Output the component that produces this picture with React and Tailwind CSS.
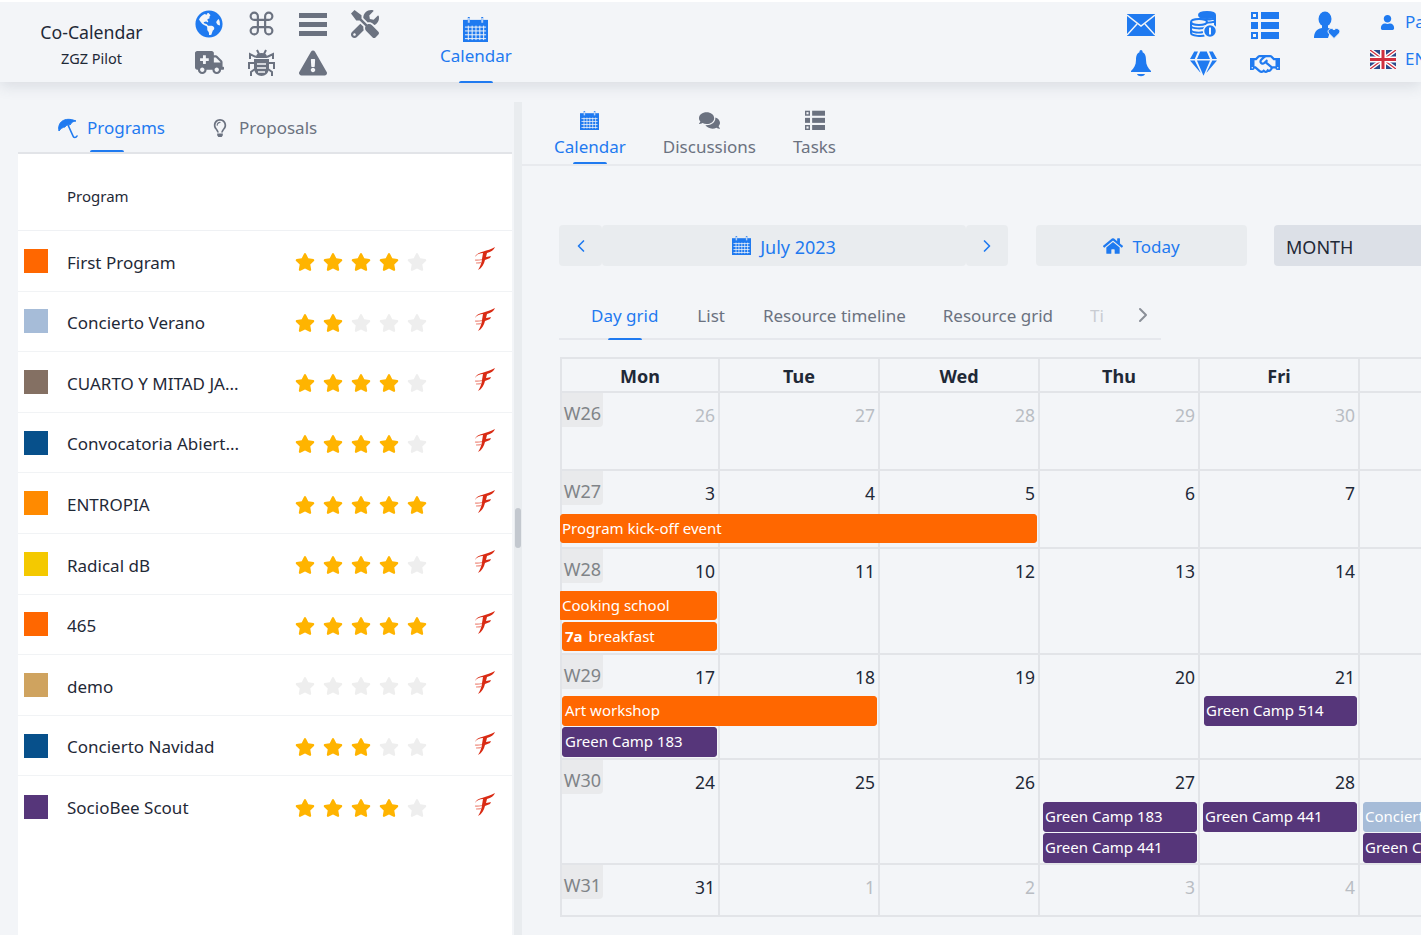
import React from 'react';
import { FaGlobeAmericas, FaTools, FaAmbulance, FaExclamationTriangle, FaGem, FaRegHandshake, FaUser, FaRegLightbulb, FaComments, FaHome, FaStar } from 'react-icons/fa';
import { Command, ChevronLeft, ChevronRight } from 'lucide-react';

const BLUE = 'text-[#1f7af0]';
const GRAY = 'text-[#6b7280]';
const BG = '#f3f5f8';

const Bars = () => (
  <svg width="28" height="24" viewBox="0 0 28 24" fill="currentColor">
    <rect x="0" y="1" width="28" height="5" />
    <rect x="0" y="10" width="28" height="5" />
    <rect x="0" y="19" width="28" height="5" />
  </svg>
);

// calendar glyph used in several places, just scale it
const Cal = ({ size = 26 }) => (
  <svg width={size} height={size} viewBox="0 0 26 26" fill="currentColor">
    <rect x="0" y="3" width="26" height="23" />
    <rect x="5" y="0" width="2" height="6" />
    <rect x="19" y="0" width="2" height="6" />
    <g fill={BG}>
      <rect x="5" y="1" width="2" height="5" opacity="0.7" />
      <rect x="19" y="1" width="2" height="5" opacity="0.7" />
      {[10, 14, 18, 22].map(y => <rect key={y} x="2" y={y} width="22" height="1" />)}
      {[5, 9, 13, 17, 21].map(x => <rect key={x} x={x} y="9" width="1" height="15" />)}
    </g>
  </svg>
);

const Checklist = ({ size = 28 }) => (
  <svg width={size} height={size} viewBox="0 0 28 28" fill="currentColor">
    <rect x="0" y="1" width="7" height="7" />
    <rect x="0" y="11" width="7" height="7" />
    <rect x="0" y="21" width="7" height="7" />
    <rect x="2" y="3" width="3" height="3" fill={BG} />
    <rect x="2" y="23" width="3" height="3" fill={BG} />
    <rect x="10" y="1" width="18" height="7" />
    <rect x="10" y="11" width="18" height="7" />
    <rect x="10" y="21" width="18" height="7" />
  </svg>
);

const UserHeart = () => (
  <svg width="26" height="28" viewBox="0 0 26 28" fill="currentColor">
    <ellipse cx="11" cy="8" rx="6.5" ry="7.5" />
    <path d="M8 14h6v3c3 .5 5 1.500 6 3l-4 1-2 6H0c0-5 2-9 8-10z" />
    <path d="M20 27.500l-5.500-5.500c-2-3 3-6.500 5.500-3 2.500-3.500 7.500 0 5.500 3z" stroke={BG} strokeWidth="1" />
  </svg>
);

const Mail = () => (
  <svg width="28" height="22" viewBox="0 0 28 22" fill="currentColor">
    <rect width="28" height="22" />
    <path d="M0 1l14 11L28 1M0 21l10-11M28 21L18 10" fill="none" stroke={BG} strokeWidth="1.500" />
  </svg>
);

const Coins = () => (
  <svg width="27" height="27" viewBox="0 0 27 27" fill="none" stroke="currentColor" strokeWidth="2">
    <ellipse cx="17" cy="4" rx="8" ry="3" fill="currentColor" />
    <path d="M9 7c1 2 14 2 16 0M9 11c3 1 14 1 16-1M25 4v12" />
    <ellipse cx="9" cy="11" rx="8" ry="3" fill={BG} />
    <path d="M1 11v11c0 3 12 4 14 2M1 15c1 3 12 3 15 1M1 19c1 3 9 3 12 2" />
    <circle cx="20" cy="20" r="6.500" fill="currentColor" stroke={BG} strokeWidth="1.500" />
    <path d="M20 16.500v7" stroke={BG} strokeWidth="2" />
  </svg>
);

const Bell = () => (
  <svg width="20" height="27" viewBox="0 0 20 27" fill="currentColor">
    <rect x="8.500" y="0" width="3" height="4" rx="1.500" />
    <path d="M10 2c4 0 5 4 5 8 0 5 2 8 5 11v1H0v-1c3-3 5-6 5-11 0-4 1-8 5-8z" />
    <path d="M6 24h8c-1 3-7 3-8 0z" />
  </svg>
);

const Beetle = () => (
  <svg width="29" height="28" viewBox="0 0 29 28" fill="none" stroke="currentColor" strokeWidth="2">
    <path d="M10 1l2 4M19 1l-2 4M9 8L3 5v5M20 8l6-3v5M7 14H2v6M22 14h5v6M8 20l-4 3v4M21 20l4 3v4" />
    <path d="M10 8c0-4 9-4 9 0z" fill="currentColor" />
    <path d="M7 10h15v9c0 5-4 8-7.500 8S7 24 7 19z" fill="currentColor" stroke="none" />
    <path d="M10 15h9M10 19h9M11 23h7" stroke={BG} strokeWidth="1.500" />
  </svg>
);

const Umbrella = () => (
  <svg width="20" height="22" viewBox="0 0 20 22" fill="none" stroke="currentColor">
    <path d="M1 14C-1 6 6-1 18 4c-3 0-5 2-6 4-2-1-4 0-5 2-2 0-5 2-6 4z" fill="currentColor" strokeWidth="1" />
    <path d="M10 8l5 11c.500 2 3 2 4 0" strokeWidth="1.600" strokeLinecap="round" />
  </svg>
);

const Flag = () => (
  <svg width="26" height="19" viewBox="0 0 26 19" className="shrink-0">
    <rect width="26" height="19" fill="#2b4a8b" />
    <path d="M0 0l26 19M26 0L0 19" stroke="#fff" strokeWidth="4" />
    <path d="M0 0l26 19M26 0L0 19" stroke="#d0303f" strokeWidth="1.300" />
    <path d="M13 0v19M0 9.500h26" stroke="#fff" strokeWidth="6" />
    <path d="M13 0v19M0 9.500h26" stroke="#d0303f" strokeWidth="3" />
  </svg>
);

// red swoosh logo at the end of each program row
const Swoosh = () => (
  <svg width="22" height="24" viewBox="0 0 22 24" fill="#d92b14">
    <path d="M1 10C3 4 13 5 21 0c-1 3-4 5-8 6l-1 4c2 0 4-1 5-1l-1 2-5 2c-1 4-3 8-7 10 2-3 4-8 4-11l1-6C6 6 3 7 1 10z" />
    <path d="M1 13c3 .500 5 0 7-.500M2 16c2 0 4 0 5-.500" stroke="#ee8a7c" strokeWidth="1.200" fill="none" />
  </svg>
);

const PROGRAMS = [
  { name: 'First Program', color: 'bg-[#ff6700]', stars: 4 },
  { name: 'Concierto Verano', color: 'bg-[#a6bcd8]', stars: 2 },
  { name: 'CUARTO Y MITAD JA...', color: 'bg-[#847063]', stars: 4 },
  { name: 'Convocatoria Abiert...', color: 'bg-[#07508b]', stars: 4 },
  { name: 'ENTROPIA', color: 'bg-[#ff8a00]', stars: 5 },
  { name: 'Radical dB', color: 'bg-[#f4c900]', stars: 4 },
  { name: '465', color: 'bg-[#ff6700]', stars: 5 },
  { name: 'demo', color: 'bg-[#cfa35f]', stars: 0 },
  { name: 'Concierto Navidad', color: 'bg-[#07508b]', stars: 3 },
  { name: 'SocioBee Scout', color: 'bg-[#56367a]', stars: 4 },
];

const COLS = ['col-start-1', 'col-start-2', 'col-start-3', 'col-start-4', 'col-start-5', 'col-start-6', 'col-start-7'];

const ORANGE = 'bg-[#ff6700] border-[#ff6700]';
const PURPLE = 'bg-[#56367a] border-[#56367a]';
const LIGHT = 'bg-[#a6bcd8] border-[#a6bcd8]';

const WEEKS = [
  { label: 'W26', rows: 'h-[78px] grid-rows-[78px]', days: [26, 27, 28, 29, 30, 1, 2], muted: d => true, events: [] },
  {
    label: 'W27', rows: 'h-[78px] grid-rows-[43px_29px_6px]', days: [3, 4, 5, 6, 7, 8, 9], muted: d => false,
    events: [{ text: 'Program kick-off event', cls: 'col-start-1 col-span-3 row-start-2 mr-[3px] pl-px', color: ORANGE }],
  },
  {
    label: 'W28', rows: 'h-[106px] grid-rows-[42px_31px_33px]', days: [10, 11, 12, 13, 14, 15, 16], muted: d => false,
    events: [
      { text: 'Cooking school', cls: 'col-start-1 row-start-2 mr-[3px] pl-px h-[29px] rounded-l-none', color: ORANGE },
      { time: '7a', text: 'breakfast', cls: 'col-start-1 row-start-3 ml-[2px] mr-[3px] pl-[2px] h-[29px]', color: ORANGE },
    ],
  },
  {
    label: 'W29', rows: 'h-[105px] grid-rows-[41px_31px_33px]', days: [17, 18, 19, 20, 21, 22, 23], muted: d => false,
    events: [
      { text: 'Art workshop', cls: 'col-start-1 col-span-2 row-start-2 ml-[2px] mr-[3px] pl-[2px] h-[30px]', color: ORANGE },
      { text: 'Green Camp 183', cls: 'col-start-1 row-start-3 ml-[2px] mr-[3px] pl-[2px] h-[30px]', color: PURPLE },
      { text: 'Green Camp 514', cls: 'col-start-5 row-start-2 ml-[4px] mr-[3px] pl-px h-[30px]', color: PURPLE },
    ],
  },
  {
    label: 'W30', rows: 'h-[105px] grid-rows-[42px_31px_32px]', days: [24, 25, 26, 27, 28, 29, 30], muted: d => false,
    events: [
      { text: 'Green Camp 183', cls: 'col-start-4 row-start-2 ml-[3px] mr-[3px] pl-px h-[30px]', color: PURPLE },
      { text: 'Green Camp 441', cls: 'col-start-4 row-start-3 ml-[3px] mr-[3px] pl-px h-[30px]', color: PURPLE },
      { text: 'Green Camp 441', cls: 'col-start-5 row-start-2 ml-[3px] mr-[3px] pl-px h-[30px]', color: PURPLE },
      { text: 'Concierto Verano', cls: 'col-start-6 row-start-2 ml-[3px] mr-[3px] pl-px h-[30px]', color: LIGHT },
      { text: 'Green Camp 441', cls: 'col-start-6 row-start-3 ml-[3px] mr-[3px] pl-px h-[30px]', color: PURPLE },
    ],
  },
  { label: 'W31', rows: 'h-[52px] grid-rows-[52px]', days: [31, 1, 2, 3, 4, 5, 6], muted: d => d < 20, events: [] },
];

const Tab = ({ icon, label, active, under = 'mt-[3px]' }) => (
  <div className={`flex flex-col items-center ${active ? BLUE : GRAY}`}>
    <div className="h-[26px] flex items-center justify-center">{icon}</div>
    <div className="text-[17px] leading-[26px] mt-[1px]">{label}</div>
    <div className={`w-[34px] h-[2px] ${under} rounded-t ${active ? 'bg-[#1f7af0]' : 'bg-transparent'}`} />
  </div>
);

const Week = ({ week }) => (
  <div className={`grid grid-cols-[repeat(7,160px)] w-[1120px] border-b-2 border-[#e2e4e8] ${week.rows}`}>
    {week.days.map((d, i) => (
      <div key={i} className={`${COLS[i]} row-start-1 row-span-full border-r-2 border-[#e2e4e8] flex items-start justify-between ${i === 0 ? 'border-l-2' : ''}`}>
        {i === 0 ? (
          <span className="w-[41px] h-[34px] bg-[#e9eaec] rounded-br text-[18px] leading-[40px] text-center text-[#808488]">{week.label}</span>
        ) : <span />}
        <span className={`text-[17.500px] leading-[24px] mt-[10px] pr-[3px] ${week.muted(d) ? 'text-[#b9bdc3]' : 'text-[#1f2937]'}`}>{d}</span>
      </div>
    ))}
    {week.events.map((e, i) => (
      <div key={i} className={`${e.cls} ${e.color} border rounded-[3px] text-white text-[15px] leading-[27px] whitespace-nowrap overflow-hidden z-10`}>
        {e.time && <b className="mr-[6px]">{e.time}</b>}
        {e.text}
      </div>
    ))}
  </div>
);

export default function App() {
  return (
    <div className="w-[1427px] h-[938px] bg-white overflow-hidden pt-[2px] pr-[6px] pb-[3px] font-['Noto_Sans','Open_Sans',sans-serif] text-[#1f2937]">
      <div className="w-full h-full bg-[#f3f5f8] flex flex-col overflow-hidden">
        {/* top bar */}
        <header className="relative z-20 h-[80px] shrink-0 flex bg-[#f3f5f8] shadow-[0_4px_14px_rgba(60,70,90,0.14)]">
          <div className="w-[183px] flex flex-col items-center pt-[16px]">
            <div className="text-[17.700px] leading-[28px]">Co-Calendar</div>
            <div className="text-[14.500px] leading-[20px] mt-[2px]">ZGZ Pilot</div>
          </div>
          <div className={`grid grid-cols-[repeat(4,52px)] grid-rows-[39px_39px] pt-[2px] place-items-center ${GRAY}`}>
            <FaGlobeAmericas size={28} className={BLUE} />
            <Command size={29} strokeWidth={1.8} />
            <Bars />
            <FaTools size={28} />
            <FaAmbulance size={29} />
            <Beetle />
            <FaExclamationTriangle size={28} />
          </div>
          <div className="ml-[49px] pt-[14px]">
            <Tab icon={<Cal size={25} />} label="Calendar" active under="mt-[12px]" />
          </div>
          <div className={`ml-auto flex ${BLUE}`}>
            <div className="grid grid-cols-[repeat(4,62px)] grid-rows-[39px_39px] pt-[3px] place-items-center">
              <Mail />
              <Coins />
              <Checklist />
              <UserHeart />
              <Bell />
              <FaGem size={27} />
              <FaRegHandshake size={30} />
            </div>
            <div className="w-[63px] overflow-hidden pt-[8px] pl-[12px] text-[17px] whitespace-nowrap">
              <div className="flex items-center gap-[10px] h-[24px] pl-[10px]"><FaUser size={15} className="shrink-0" /><span>Pablo</span></div>
              <div className="flex items-center gap-[9px] h-[24px] mt-[13px]"><Flag /><span>EN</span></div>
            </div>
          </div>
        </header>

        <div className="flex-1 flex min-h-0">
          {/* programs sidebar */}
          <aside className="w-[514px] shrink-0 flex flex-col pl-[18px]">
            <div className="h-[70px] shrink-0 flex flex-col justify-end">
              <div className="flex items-center pl-[40px] text-[17px] h-[26px]">
                <span className={BLUE}><Umbrella /></span>
                <span className={`ml-[9px] ${BLUE}`}>Programs</span>
                <FaRegLightbulb size={18} className={`ml-[46px] ${GRAY}`} />
                <span className={`ml-[10px] ${GRAY}`}>Proposals</span>
              </div>
              <div className="w-[34px] h-[2px] ml-[72px] mt-[9px] bg-[#1f7af0] rounded-t" />
            </div>
            <div className="flex-1 bg-white border-t-2 border-[#e2e4e8] w-[494px]">
              <div className="h-[77px] flex items-center pl-[49px] pt-[8px] text-[15px] border-b border-[#eff1f4]">Program</div>
              {PROGRAMS.map(p => (
                <div key={p.name} className="h-[60.600px] flex items-center border-b border-[#f1f3f5] last:border-0">
                  <span className={`w-[24px] h-[24px] ml-[6px] shrink-0 ${p.color}`} />
                  <span className="ml-[19px] w-[228px] text-[17px] pt-[3px] whitespace-nowrap">{p.name}</span>
                  <span className="flex gap-[8px] mt-[3px]">
                    {[0, 1, 2, 3, 4].map(i => (
                      <FaStar key={i} size={20} className={i < p.stars ? 'text-[#ffb400]' : 'text-[#eeeeee]'} />
                    ))}
                  </span>
                  <span className="ml-[47px] -mt-[3px]"><Swoosh /></span>
                </div>
              ))}
            </div>
          </aside>

          {/* scrollbar */}
          <div className="w-[8px] shrink-0 mt-[20px] bg-[#e9ecef] flex flex-col items-center pt-[406px]">
            <div className="w-[6px] h-[40px] rounded bg-[#c3c8cf]" />
          </div>

          {/* calendar pane */}
          <main className="flex-1 min-w-0 overflow-hidden">
            <div className="h-[84px] border-b-2 border-[#e8eaee] flex items-end pl-[32px] gap-[37px]">
              <Tab icon={<Cal size={19} />} label="Calendar" active under="mt-[2px]" />
              <Tab icon={<FaComments size={21} />} label="Discussions" under="mt-[2px]" />
              <Tab icon={<Checklist size={20} />} label="Tasks" under="mt-[2px]" />
            </div>

            <div className="pl-[37px] pt-[59px] w-[1300px]">
              <div className={`flex h-[41px] ${BLUE} text-[18px]`}>
                <div className="w-[43px] shrink-0 bg-[#e9ecef] rounded flex items-center justify-center"><ChevronLeft size={20} /></div>
                <div className="w-[364px] shrink-0 bg-[#e9ecef] rounded flex items-center justify-center gap-[9px]"><Cal size={19} /><span className="mt-[3px]">July 2023</span></div>
                <div className="w-[42px] shrink-0 bg-[#e9ecef] rounded flex items-center justify-center"><ChevronRight size={20} /></div>
                <div className="ml-[28px] w-[211px] shrink-0 bg-[#e9ecef] rounded flex items-center justify-center gap-[9px] text-[17px]"><FaHome size={20} /><span className="mt-[3px]">Today</span></div>
                <div className="ml-[27px] w-[200px] shrink-0 bg-[#dce0e7] rounded pl-[12px] flex items-center text-[#1f2937]"><span className="mt-[3px]">MONTH</span></div>
              </div>

              <div className="w-[602px] h-[37px] mt-[37px] border-b-2 border-[#e6e8ed] flex items-start pl-[32px] text-[17px] text-[#6b7280] whitespace-nowrap">
                <div className={`flex flex-col items-center ${BLUE}`}>
                  <span className="leading-[26px]">Day grid</span>
                  <span className="w-[34px] h-[2px] mt-[9px] bg-[#1f7af0] rounded-t" />
                </div>
                <span className="ml-[39px] leading-[26px]">List</span>
                <span className="ml-[38px] leading-[26px]">Resource timeline</span>
                <span className="ml-[37px] leading-[26px]">Resource grid</span>
                <span className="ml-[37px] w-[22px] overflow-hidden leading-[26px] text-[#c9ccd2]">Ti</span>
                <ChevronRight size={24} className="ml-[19px] text-[#8a8f98]" />
              </div>

              <div className="mt-[17px] ml-px w-[1120px] border-t-2 border-[#e2e4e8]">
                <div className="grid grid-cols-[repeat(7,160px)] h-[34px] border-b-2 border-[#e2e4e8] font-bold text-[18px]">
                  {['Mon', 'Tue', 'Wed', 'Thu', 'Fri', 'Sat', 'Sun'].map((d, i) => (
                    <div key={d} className={`flex items-center justify-center pt-[3px] border-r-2 border-[#e2e4e8] ${i === 0 ? 'border-l-2' : ''}`}>{d}</div>
                  ))}
                </div>
                {WEEKS.map(w => <Week key={w.label} week={w} />)}
              </div>
            </div>
          </main>
        </div>
      </div>
    </div>
  );
}
